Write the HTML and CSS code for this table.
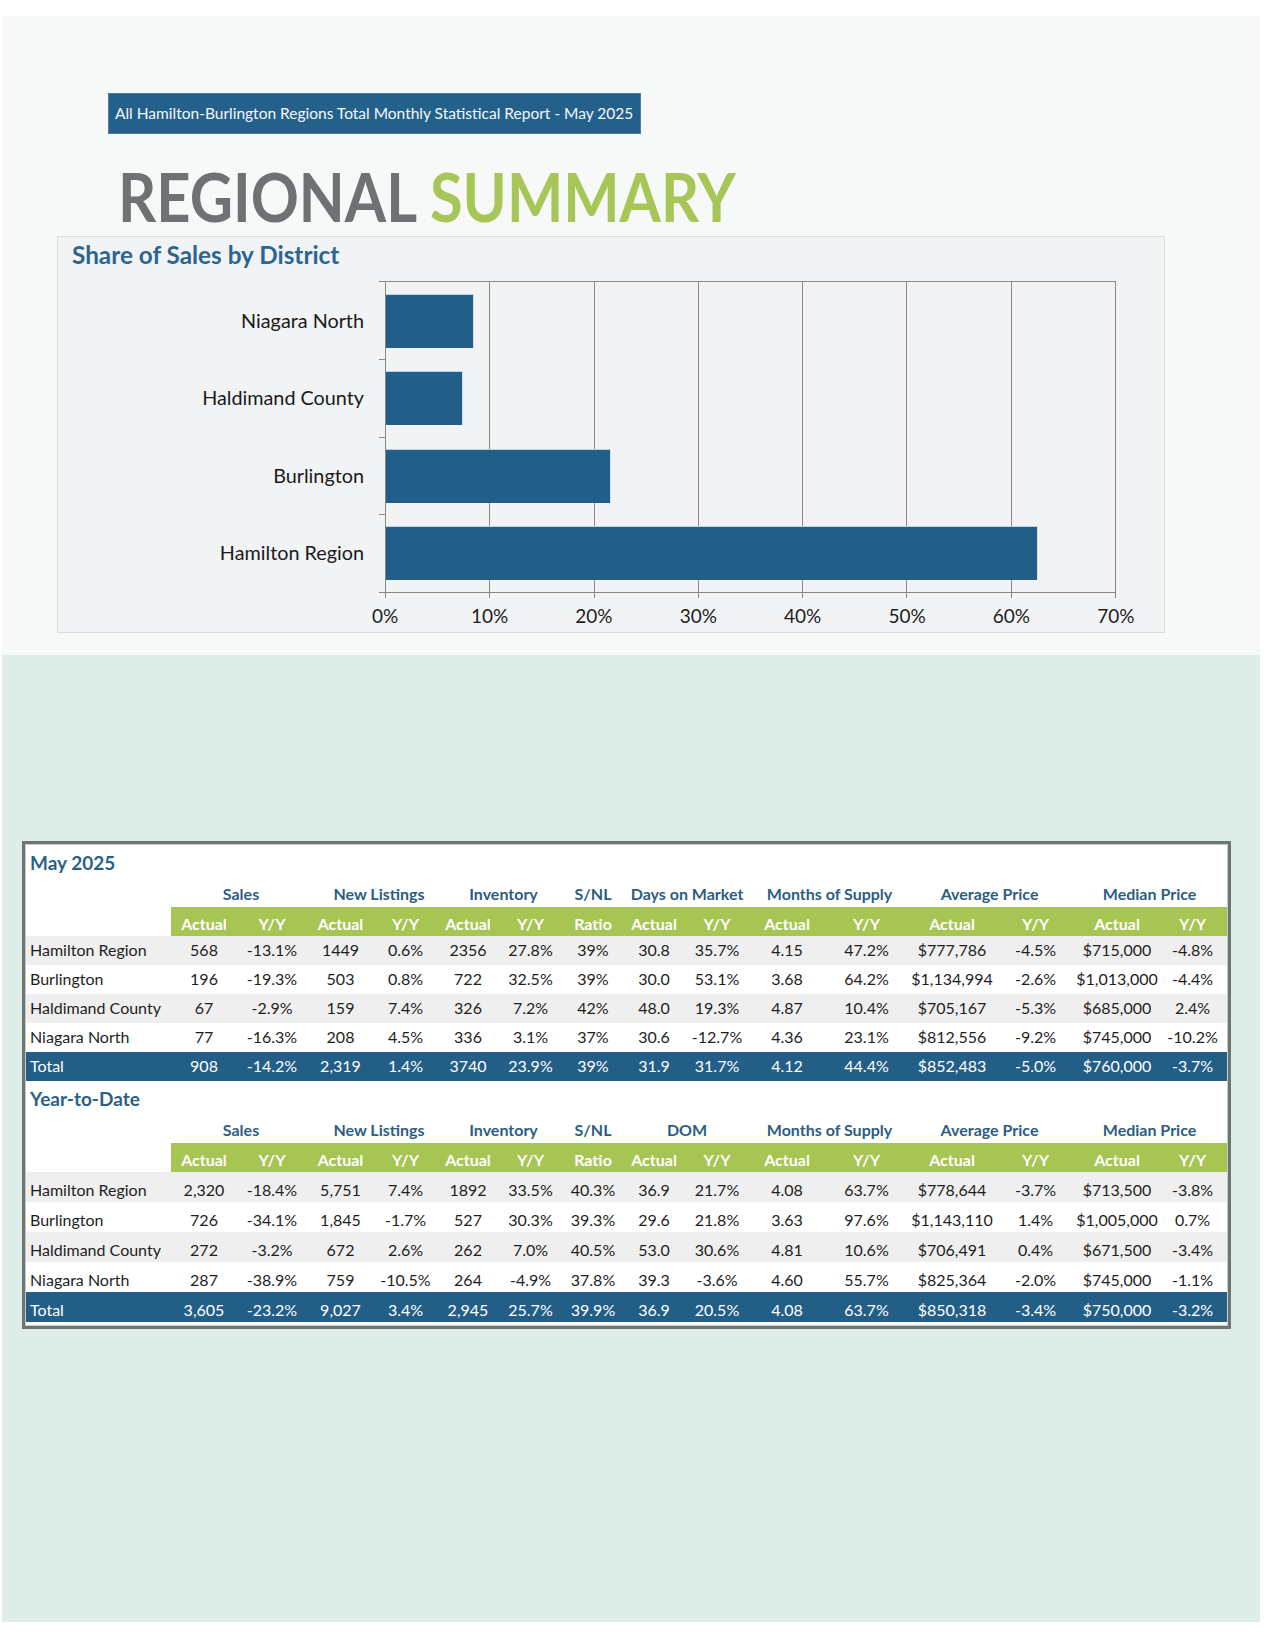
FILE: index.html
```html
<!DOCTYPE html>
<html lang="en">
<head>
<meta charset="utf-8">
<title>Regional Summary - May 2025</title>
<link rel="stylesheet" href="styles.css">
</head>
<body>
<div class="page">
  <section class="top">
    <div class="banner">All Hamilton-Burlington Regions Total Monthly Statistical Report - May 2025</div>
    <h1 class="title"><span class="t-gray">REGIONAL</span> <span class="t-green">SUMMARY</span></h1>
    <div class="chart-panel">
      <h2 class="chart-title">Share of Sales by District</h2>
      <div class="chart">
        <div class="cat-labels">
          <div class="cat">Niagara North</div>
          <div class="cat">Haldimand County</div>
          <div class="cat">Burlington</div>
          <div class="cat">Hamilton Region</div>
        </div>
        <div class="yticks"><div></div><div></div><div></div><div></div></div>
        <div class="plot">
          <div class="gridlines"><div></div><div></div><div></div><div></div><div></div><div></div><div></div></div>
          <div class="bars">
            <div class="band"><div class="bar" style="width:12.11%"></div></div>
            <div class="band"><div class="bar" style="width:10.54%"></div></div>
            <div class="band"><div class="bar" style="width:30.84%"></div></div>
            <div class="band"><div class="bar" style="width:89.37%"></div></div>
          </div>
        </div>
        <div class="xticks"><div></div><div></div><div></div><div></div><div></div><div></div><div></div></div>
        <div class="xlabels">
          <span>0%</span><span>10%</span><span>20%</span><span>30%</span><span>40%</span><span>50%</span><span>60%</span><span>70%</span>
        </div>
      </div>
    </div>
  </section>

  <section class="bottom">
    <div class="stats-box">
      <div class="sec-title">May 2025</div>
      <table class="stats">
        <colgroup>
          <col class="c-label"><col class="c66"><col class="c70"><col class="c67"><col class="c63"><col class="c62"><col class="c63"><col class="c62"><col class="c60"><col class="c66"><col class="c74"><col class="c85"><col class="c86"><col class="c81"><col class="c82"><col class="c69">
        </colgroup>
        <thead>
          <tr class="grp">
            <th></th><th colspan="2" class="h-sales">Sales</th><th colspan="2" class="h-nl">New Listings</th><th colspan="2" class="h-inv">Inventory</th><th>S/NL</th><th colspan="2">Days on Market</th><th colspan="2">Months of Supply</th><th colspan="2" class="h-avg">Average Price</th><th colspan="2" class="h-med">Median Price</th>
          </tr>
          <tr class="sub">
            <th class="blank"></th><th>Actual</th><th>Y/Y</th><th>Actual</th><th>Y/Y</th><th>Actual</th><th>Y/Y</th><th>Ratio</th><th>Actual</th><th>Y/Y</th><th>Actual</th><th>Y/Y</th><th>Actual</th><th>Y/Y</th><th>Actual</th><th>Y/Y</th>
          </tr>
        </thead>
        <tbody>
          <tr class="alt"><td>Hamilton Region</td><td>568</td><td>-13.1%</td><td>1449</td><td>0.6%</td><td>2356</td><td>27.8%</td><td>39%</td><td>30.8</td><td>35.7%</td><td>4.15</td><td>47.2%</td><td>$777,786</td><td>-4.5%</td><td>$715,000</td><td>-4.8%</td></tr>
          <tr><td>Burlington</td><td>196</td><td>-19.3%</td><td>503</td><td>0.8%</td><td>722</td><td>32.5%</td><td>39%</td><td>30.0</td><td>53.1%</td><td>3.68</td><td>64.2%</td><td>$1,134,994</td><td>-2.6%</td><td>$1,013,000</td><td>-4.4%</td></tr>
          <tr class="alt"><td>Haldimand County</td><td>67</td><td>-2.9%</td><td>159</td><td>7.4%</td><td>326</td><td>7.2%</td><td>42%</td><td>48.0</td><td>19.3%</td><td>4.87</td><td>10.4%</td><td>$705,167</td><td>-5.3%</td><td>$685,000</td><td>2.4%</td></tr>
          <tr><td>Niagara North</td><td>77</td><td>-16.3%</td><td>208</td><td>4.5%</td><td>336</td><td>3.1%</td><td>37%</td><td>30.6</td><td>-12.7%</td><td>4.36</td><td>23.1%</td><td>$812,556</td><td>-9.2%</td><td>$745,000</td><td>-10.2%</td></tr>
          <tr class="total"><td>Total</td><td>908</td><td>-14.2%</td><td>2,319</td><td>1.4%</td><td>3740</td><td>23.9%</td><td>39%</td><td>31.9</td><td>31.7%</td><td>4.12</td><td>44.4%</td><td>$852,483</td><td>-5.0%</td><td>$760,000</td><td>-3.7%</td></tr>
        </tbody>
      </table>

      <div class="sec-title">Year-to-Date</div>
      <table class="stats ytd">
        <colgroup>
          <col class="c-label"><col class="c66"><col class="c70"><col class="c67"><col class="c63"><col class="c62"><col class="c63"><col class="c62"><col class="c60"><col class="c66"><col class="c74"><col class="c85"><col class="c86"><col class="c81"><col class="c82"><col class="c69">
        </colgroup>
        <thead>
          <tr class="grp">
            <th></th><th colspan="2" class="h-sales">Sales</th><th colspan="2" class="h-nl">New Listings</th><th colspan="2" class="h-inv">Inventory</th><th>S/NL</th><th colspan="2">DOM</th><th colspan="2">Months of Supply</th><th colspan="2" class="h-avg">Average Price</th><th colspan="2" class="h-med">Median Price</th>
          </tr>
          <tr class="sub">
            <th class="blank"></th><th>Actual</th><th>Y/Y</th><th>Actual</th><th>Y/Y</th><th>Actual</th><th>Y/Y</th><th>Ratio</th><th>Actual</th><th>Y/Y</th><th>Actual</th><th>Y/Y</th><th>Actual</th><th>Y/Y</th><th>Actual</th><th>Y/Y</th>
          </tr>
        </thead>
        <tbody>
          <tr class="alt"><td>Hamilton Region</td><td>2,320</td><td>-18.4%</td><td>5,751</td><td>7.4%</td><td>1892</td><td>33.5%</td><td>40.3%</td><td>36.9</td><td>21.7%</td><td>4.08</td><td>63.7%</td><td>$778,644</td><td>-3.7%</td><td>$713,500</td><td>-3.8%</td></tr>
          <tr><td>Burlington</td><td>726</td><td>-34.1%</td><td>1,845</td><td>-1.7%</td><td>527</td><td>30.3%</td><td>39.3%</td><td>29.6</td><td>21.8%</td><td>3.63</td><td>97.6%</td><td>$1,143,110</td><td>1.4%</td><td>$1,005,000</td><td>0.7%</td></tr>
          <tr class="alt"><td>Haldimand County</td><td>272</td><td>-3.2%</td><td>672</td><td>2.6%</td><td>262</td><td>7.0%</td><td>40.5%</td><td>53.0</td><td>30.6%</td><td>4.81</td><td>10.6%</td><td>$706,491</td><td>0.4%</td><td>$671,500</td><td>-3.4%</td></tr>
          <tr><td>Niagara North</td><td>287</td><td>-38.9%</td><td>759</td><td>-10.5%</td><td>264</td><td>-4.9%</td><td>37.8%</td><td>39.3</td><td>-3.6%</td><td>4.60</td><td>55.7%</td><td>$825,364</td><td>-2.0%</td><td>$745,000</td><td>-1.1%</td></tr>
          <tr class="total"><td>Total</td><td>3,605</td><td>-23.2%</td><td>9,027</td><td>3.4%</td><td>2,945</td><td>25.7%</td><td>39.9%</td><td>36.9</td><td>20.5%</td><td>4.08</td><td>63.7%</td><td>$850,318</td><td>-3.4%</td><td>$750,000</td><td>-3.2%</td></tr>
        </tbody>
      </table>
    </div>
  </section>
</div>
</body>
</html>
```

FILE: styles.css
```css
html, body {
  margin: 0;
  padding: 0;
  background: #ffffff;
}

body {
  font-family: "Lato", "Liberation Sans", sans-serif;
  color: #1e1e1e;
}

.page {
  width: 1258px;
  margin: 16px 0 0 2px;
}

/* ---------- top section ---------- */
.top {
  background: #f7f9f9;
  height: 639px;
  padding-top: 77px;
  box-sizing: border-box;
  display: flex;
  flex-direction: column;
  align-items: flex-start;
}

.banner {
  margin-left: 106px;
  height: 41px;
  box-sizing: border-box;
  padding: 0 7px 2px 6px;
  background: #23608a;
  border: 1px solid #4f7fa5;
  color: #f4f8fb;
  font-size: 15.5px;
  display: flex;
  align-items: center;
  white-space: nowrap;
}

.title {
  margin: 29px 0 0 116px;
  font-family: "Lato", sans-serif;
  font-weight: 700;
  font-size: 67px;
  line-height: 67px;
  white-space: nowrap;
  transform: scaleX(0.89);
  transform-origin: left center;
}

.t-gray { color: #6d7275; }
.t-green { color: #a8c658; }

.chart-panel {
  margin: 6px 0 0 55px;
  width: 1108px;
  height: 397px;
  box-sizing: border-box;
  background: #f1f3f5;
  border: 1px solid #d9dcdf;
  padding: 4px 0 0 0;
}

.chart-title {
  margin: 0 0 0 14px;
  font-size: 24.3px;
  line-height: 28px;
  font-weight: 700;
  color: #2c6591;
}

.chart {
  margin-top: 12px;
  display: grid;
  grid-template-columns: 306px 15px 6px 731px;
  grid-template-rows: 312px 5px auto;
}

.cat-labels {
  grid-column: 1;
  grid-row: 1;
  display: flex;
  flex-direction: column;
  padding: 1px 0;
}

.cat {
  flex: 1;
  display: flex;
  align-items: center;
  justify-content: flex-end;
  font-size: 19.8px;
  color: #1a1a1a;
  padding-bottom: 2px;
}

.yticks {
  grid-column: 3;
  grid-row: 1;
  display: flex;
  flex-direction: column;
}

.yticks div {
  flex: 1;
  border-top: 1px solid #888888;
}

.yticks div:last-child {
  border-bottom: 1px solid #888888;
}

.plot {
  grid-column: 4;
  grid-row: 1;
  border: 1px solid #888888;
  display: grid;
}

.gridlines,
.bars {
  grid-area: 1 / 1;
}

.gridlines {
  display: flex;
}

.gridlines div {
  flex: 1;
  border-right: 1px solid #888888;
}

.gridlines div:last-child {
  border-right: none;
}

.bars {
  display: flex;
  flex-direction: column;
}

.band {
  flex: 1;
  display: flex;
  align-items: center;
}

.bar {
  height: 54px;
  box-sizing: border-box;
  background: #225f88;
  border-top: 1px solid #b9d3e4;
  border-right: 1px solid #cfe0eb;
}

.xticks {
  grid-column: 4;
  grid-row: 2;
  display: flex;
}

.xticks div {
  flex: 1;
  border-left: 1px solid #888888;
}

.xticks div:last-child {
  border-right: 1px solid #888888;
}

.xlabels {
  grid-column: 4;
  grid-row: 3;
  margin: 6px -52px 0 -52px;
  display: flex;
}

.xlabels span {
  flex: 1;
  text-align: center;
  font-size: 19px;
  line-height: 24px;
  color: #1e1e1e;
}

/* ---------- bottom section ---------- */
.bottom {
  background: #deede7;
  height: 967px;
  padding-top: 186px;
  box-sizing: border-box;
}

.stats-box {
  margin-left: 20px;
  width: 1209px;
  box-sizing: border-box;
  background: #ffffff;
  border: 3px solid #6c7571;
  padding: 1px 1px 4px 1px;
  box-shadow: inset 0 0 0 1px #c3cbc8;
}

.sec-title {
  height: 35px;
  line-height: 35px;
  padding-left: 4px;
  font-size: 19px;
  font-weight: 700;
  color: #2b5f86;
}

.stats {
  width: 100%;
  border-collapse: collapse;
  table-layout: fixed;
  font-size: 16px;
}

.c-label { width: 145px; }
.c60 { width: 60px; }
.c62 { width: 62px; }
.c63 { width: 63px; }
.c66 { width: 66px; }
.c67 { width: 67px; }
.c69 { width: 69px; }
.c70 { width: 70px; }
.c74 { width: 74px; }
.c81 { width: 81px; }
.c82 { width: 82px; }
.c85 { width: 85px; }
.c86 { width: 86px; }

.stats th,
.stats td {
  padding: 0;
  text-align: center;
  white-space: nowrap;
  vertical-align: middle;
}

.grp th {
  height: 27px;
  font-weight: 700;
  color: #2e5d82;
}

.grp th.h-sales { padding-left: 4px; }
.grp th.h-nl { padding-left: 14px; }
.grp th.h-inv { padding-left: 8px; }
.grp th.h-avg { padding-right: 6px; }
.grp th.h-med { padding-right: 4px; }

.sub th {
  height: 25px;
  padding-top: 4px;
  background: #a6c553;
  color: #ffffff;
  font-weight: 700;
}

.sub th.blank {
  background: transparent;
}

.stats tbody td {
  height: 26px;
  padding-bottom: 3px;
  color: #1e1e1e;
}

.stats tbody td:first-child {
  text-align: left;
  padding-left: 4px;
}

.ytd tbody td {
  height: 25px;
  padding-top: 5px;
  padding-bottom: 0;
}

.stats tr.alt td {
  background: #efefef;
}

.stats tr.total td {
  background: #235e87;
  color: #ffffff;
}
```
